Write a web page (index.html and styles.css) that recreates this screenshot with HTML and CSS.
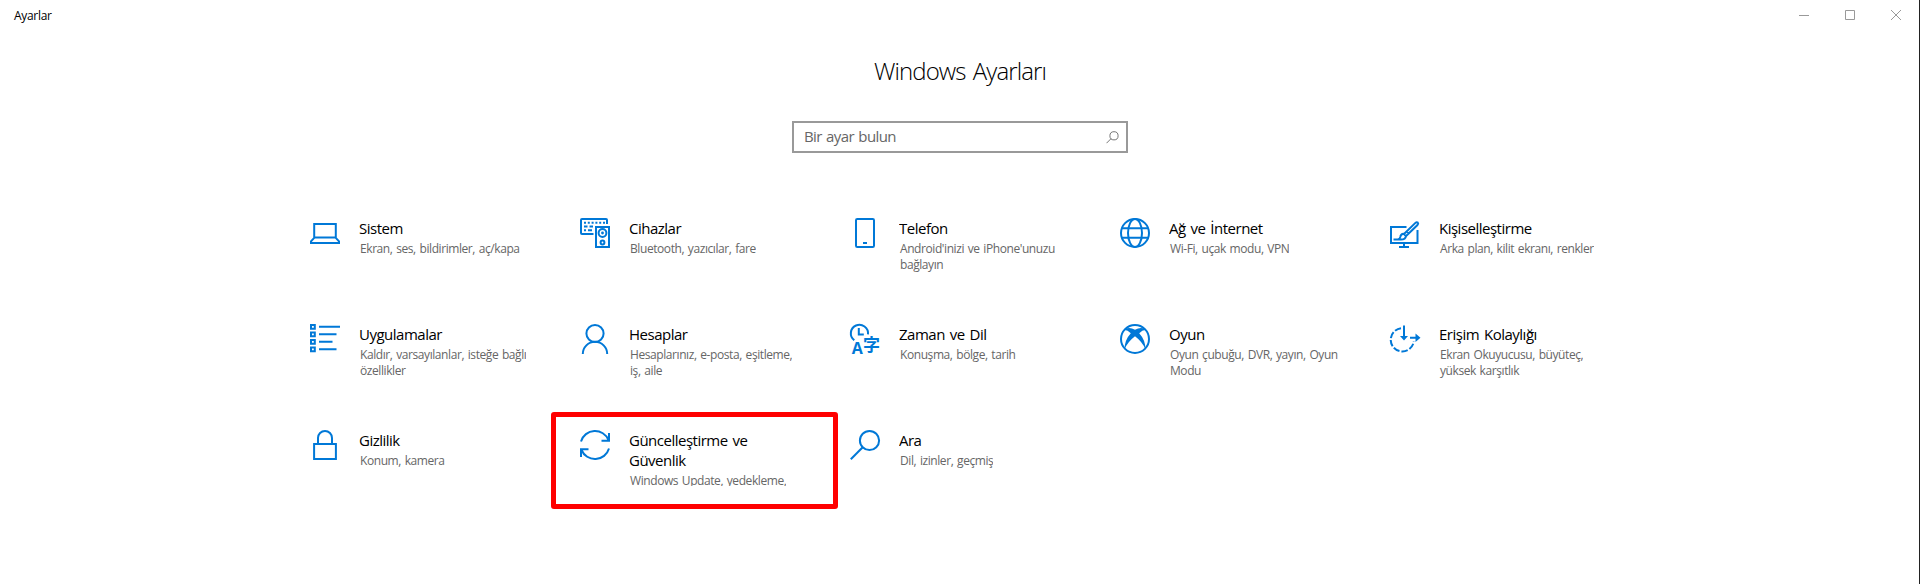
FILE: index.html
```html
<!DOCTYPE html>
<html lang="tr">
<head>
<meta charset="utf-8">
<title>Ayarlar</title>
<link rel="stylesheet" href="styles.css">
</head>
<body>
<div class="window">
  <header class="titlebar">
    <span class="caption">Ayarlar</span>
    <div class="controls">
      <svg class="control" viewBox="0 0 10 10"><path d="M0 5.5h10"/></svg>
      <svg class="control" viewBox="0 0 10 10"><path d="M.5 .5h9v9h-9z"/></svg>
      <svg class="control" viewBox="0 0 10 10"><path d="M0 0l10 10M10 0L0 10"/></svg>
    </div>
  </header>
  <main class="content">
    <h1 class="heading">Windows Ayarları</h1>
    <div class="search">
      <span class="placeholder">Bir ayar bulun</span>
      <svg class="search-icon" viewBox="0 0 13 13"><circle cx="8" cy="4.8" r="4.1"/><path d="M5 7.7L.5 12.2"/></svg>
    </div>
    <div class="grid">
      <div class="item">
        <svg class="icon" viewBox="0 0 30 30"><path d="M4.200 6h21.600v13.600H4.200zM4.200 19.800l-3.200 3.500v1.700h28v-1.700l-3.200-3.500"/></svg>
        <div class="text"><div class="name">Sistem</div><div class="desc">Ekran, ses, bildirimler, aç/kapa</div></div>
      </div>
      <div class="item">
        <svg class="icon" viewBox="0 0 30 30"><path d="M13.500 16H2q-1 0-1-1V2q0-1 1-1h24q1 0 1 1v4"/><path stroke-dasharray="2 1.800" d="M4 4.800h21"/><path stroke-dasharray="3.500 2" d="M4 8.500h9"/><path stroke-dasharray="2 2 4 9" d="M4 12.300h9"/><path d="M16 9h13v20H16z"/><circle cx="22.500" cy="15" r="3.900"/><circle class="solid" cx="22.500" cy="15" r="1.400"/><circle cx="22.500" cy="24.500" r="1.900"/></svg>
        <div class="text"><div class="name">Cihazlar</div><div class="desc">Bluetooth, yazıcılar, fare</div></div>
      </div>
      <div class="item">
        <svg class="icon" viewBox="0 0 30 30"><rect x="6" y="1" width="18" height="28" rx="1.300"/><path d="M13 25h4"/></svg>
        <div class="text"><div class="name">Telefon</div><div class="desc">Android'inizi ve iPhone'unuzu<br>bağlayın</div></div>
      </div>
      <div class="item">
        <svg class="icon" viewBox="0 0 30 30"><circle cx="15" cy="15" r="14"/><ellipse cx="15" cy="15" rx="7" ry="14"/><path d="M2 10.300h26M2 19.700h26"/></svg>
        <div class="text"><div class="name">Ağ ve İnternet</div><div class="desc">Wi-Fi, uçak modu, VPN</div></div>
      </div>
      <div class="item">
        <svg class="icon" viewBox="0 0 30 30"><path d="M16.500 9H1v16h26.500V12M14 25v4M9 29h10"/><path d="M3.500 21.500h7.500q4.500 0 5-3.400l-2.400-2.400q-3 .2-3.300 3.200-.3 2.200-2.500 2.600M15.800 18.300L27.500 7q1.200-1.500.3-2.400-1.100-.9-2.400.3L14 16M16.800 13.400l2.300 2.300"/></svg>
        <div class="text"><div class="name">Kişiselleştirme</div><div class="desc">Arka plan, kilit ekranı, renkler</div></div>
      </div>
      <div class="item">
        <svg class="icon" viewBox="0 0 30 30"><path d="M1 1h3.800v3.800H1zM1 8.500h3.800v3.800H1zM1 16h3.800v3.800H1zM1 23.500h3.800v3.800H1zM9 2.700h21M9 10.300h17.500M9 17.700h13.500M9 25.300h17.500"/></svg>
        <div class="text"><div class="name">Uygulamalar</div><div class="desc">Kaldır, varsayılanlar, isteğe bağlı<br>özellikler</div></div>
      </div>
      <div class="item">
        <svg class="icon" viewBox="0 0 30 30"><circle cx="15" cy="9.500" r="8.600"/><path d="M2.800 30a12.200 12.200 0 0 1 24.400 0"/></svg>
        <div class="text"><div class="name">Hesaplar</div><div class="desc">Hesaplarınız, e-posta, eşitleme,<br>iş, aile</div></div>
      </div>
      <div class="item">
        <svg class="icon" viewBox="0 0 30 30"><path d="M4.300 16.300a8.600 8.600 0 1 1 13.700-6M8.800 4v6.500h5"/><text class="latin" x="1.800" y="30">A</text><text class="kanji" x="13" y="26.500">字</text></svg>
        <div class="text"><div class="name">Zaman ve Dil</div><div class="desc">Konuşma, bölge, tarih</div></div>
      </div>
      <div class="item">
        <svg class="icon" viewBox="0 0 30 30"><circle cx="15" cy="15" r="14"/><path class="solid" d="M5.500 4.700Q10 2.800 15 5.800 20 2.800 24.500 4.700L26 6q-3-.6-6.800 3.200Q25.500 16 25.500 25.500 22.500 18 15 12.300 7.500 18 4.500 25.500 4.500 16 10.800 9.200 7 5.400 4 6z"/></svg>
        <div class="text"><div class="name">Oyun</div><div class="desc">Oyun çubuğu, DVR, yayın, Oyun<br>Modu</div></div>
      </div>
      <div class="item">
        <svg class="icon" viewBox="0 0 30 30"><path stroke-dasharray="6.500 2" d="M11 4.300A11.600 11.600 0 1 0 23.800 17.500"/><path d="M14 1.500v12M20 13.800h7"/><path class="solid" d="M10 12h8L14 16.500zM25.500 9.500v8.500l5-4.200z"/></svg>
        <div class="text"><div class="name">Erişim Kolaylığı</div><div class="desc">Ekran Okuyucusu, büyüteç,<br>yüksek karşıtlık</div></div>
      </div>
      <div class="item">
        <svg class="icon" viewBox="0 0 30 30"><path d="M4.100 14h21.800v15H4.100zM8 14V8a7 7 0 0 1 14 0v6"/></svg>
        <div class="text"><div class="name">Gizlilik</div><div class="desc">Konum, kamera</div></div>
      </div>
      <div class="item marked">
        <svg class="icon" viewBox="0 0 30 30"><path d="M1 11.500A14.600 14.600 0 0 1 28.500 10M29 3v7.800h-7.500M29 18.500A14.600 14.600 0 0 1 1.500 20M1 27v-7.800h7.500"/></svg>
        <div class="text"><div class="name">Güncelleştirme ve<br>Güvenlik</div><div class="desc">Windows Update, yedekleme,</div></div>
      </div>
      <div class="item">
        <svg class="icon" viewBox="0 0 30 30"><circle cx="19.500" cy="10.500" r="9.600"/><path d="M12.700 17.300L.8 29.200"/></svg>
        <div class="text"><div class="name">Ara</div><div class="desc">Dil, izinler, geçmiş</div></div>
      </div>
    </div>
  </main>
</div>
</body>
</html>
```

FILE: styles.css
```css
*, *::after { box-sizing: border-box; }
body {
  margin: 0;
  background: #fff;
  color: #000;
  font-family: "Open Sans", "Noto Sans", "Noto Sans CJK JP", sans-serif;
}
.window {
  height: 584px;
  border-right: 1px solid #222;
  overflow: hidden;
}
.titlebar {
  display: flex;
  justify-content: space-between;
  height: 47px;
  padding: 7px 18px 0 14px;
}
.caption { font-size: 12px; line-height: 17px; letter-spacing: -0.3px; }
.controls { display: flex; gap: 36px; padding-top: 3px; }
.control { width: 10px; height: 10px; fill: none; stroke: #999; stroke-width: 1; overflow: visible; }
.content {
  width: 1920px;
  display: flex;
  flex-direction: column;
  align-items: center;
}
.heading {
  margin: 0;
  height: 74px;
  font-size: 24px;
  line-height: 48px;
  font-weight: 300;
  letter-spacing: -0.9px;
  word-spacing: 2px;
}
.search {
  width: 336px;
  height: 32px;
  border: 2px solid #999;
  padding: 0 7px 2px 10px;
  display: flex;
  align-items: center;
  justify-content: space-between;
}
.placeholder { font-size: 15px; line-height: 20px; color: #666; letter-spacing: -0.6px; word-spacing: 1px; }
.search-icon { width: 13px; height: 13px; margin-top: 2px; fill: none; stroke: #777; stroke-width: 1; }
.grid {
  width: 1300px;
  margin-top: 65px;
  display: grid;
  grid-template-columns: repeat(5, 270px);
  grid-auto-rows: 106px;
}
.item { position: relative; display: flex; gap: 19px; }
.icon { flex: none; width: 30px; height: 30px; fill: none; stroke: #0078d7; stroke-width: 2; overflow: visible; }
.icon .solid { fill: #0078d7; stroke: none; }
.icon text { fill: #0078d7; stroke: none; font-weight: 700; }
.icon .latin { font-family: "Open Sans", sans-serif; font-size: 16px; }
.icon .kanji { font-family: "Noto Sans CJK JP", sans-serif; font-size: 17px; }
.text { height: 56px; overflow: hidden; white-space: nowrap; }
.name { font-size: 15px; line-height: 20px; letter-spacing: -0.5px; word-spacing: 1.5px; }
.desc { margin: 3px 0 0 1px; font-size: 12px; line-height: 16px; color: #666; letter-spacing: -0.42px; word-spacing: 1px; }
.marked::after {
  content: "";
  position: absolute;
  left: -29px;
  top: -18px;
  width: 287px;
  height: 97px;
  border: 5px solid #f00;
  border-radius: 3px;
}
```
